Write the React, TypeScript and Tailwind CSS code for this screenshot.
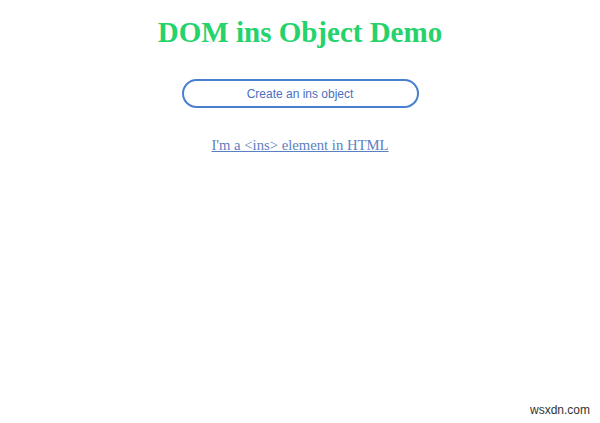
export default function App() {
  return (
    <div className="relative h-[423px] w-[600px] overflow-hidden bg-white">
      <div className="flex flex-col items-center">
        <h1 className="mt-[15px] font-['Liberation_Serif',serif] text-[29px] font-bold leading-[34px] text-[#24d36b]">
          DOM ins Object Demo
        </h1>
        <button className="mt-[30px] flex h-[29px] w-[237px] items-center justify-center rounded-full border-2 border-[#4a7fd0] bg-white font-['Liberation_Sans',sans-serif] text-[12px] text-[#4a70c0]">
          Create an ins object
        </button>
        <p className="mt-[29px] font-['Liberation_Serif',serif] text-[14.7px] leading-[17px]">
          <ins className="text-[#5b80c2] underline">I'm a &lt;ins&gt; element in HTML</ins>
        </p>
      </div>
      <span className="absolute bottom-[4px] right-[10px] font-['Liberation_Sans',sans-serif] text-[12px] text-[#333]">
        wsxdn.com
      </span>
    </div>
  )
}
